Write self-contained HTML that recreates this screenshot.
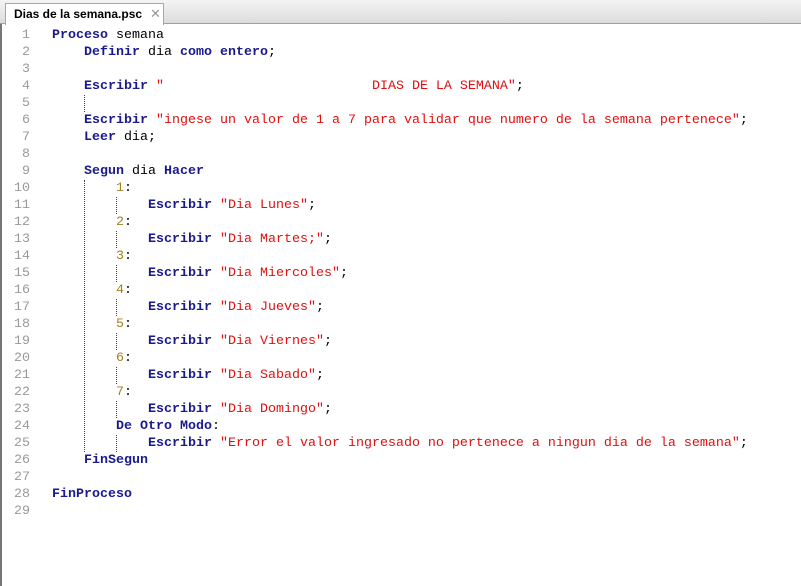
<!DOCTYPE html>
<html><head><meta charset="utf-8"><style>
*{margin:0;padding:0;box-sizing:border-box}
body{width:801px;height:586px;overflow:hidden;background:#fff;position:relative;font-family:"Liberation Mono",monospace}
.top{position:absolute;left:0;top:0;width:801px;height:24px;background:linear-gradient(#f4f4f4,#dcdcdc);border-bottom:1px solid #a0a0a0}
.tab{position:absolute;left:5px;top:3px;width:159px;height:22px;background:#fff;border:1px solid #a8a8a8;border-bottom:none;font-family:"Liberation Sans",sans-serif;font-size:12px;font-weight:bold;padding:3px 0 0 8px;color:#000}
.tab span{position:absolute;left:144px;top:2px;font-weight:normal;color:#999;font-size:13px}
.lb{position:absolute;left:0;top:24px;width:2px;height:562px;background:#777}
.ln{position:absolute;left:0;width:30px;text-align:right;font-size:13.33px;color:#999;line-height:17px}
.cd{position:absolute;left:52px;font-size:13.33px;line-height:17px;white-space:pre;color:#000}
b{color:#1a1a8c}
i{font-style:normal;color:#e01010}
u{text-decoration:none;color:#a08020}
.g{position:absolute;width:0;border-left:1px dotted #444}
</style></head><body>
<div class="top"><div class="tab">Dias de la semana.psc<span>✕</span></div></div>
<div class="lb"></div>
<div id="c"></div>
<script>
var L=[
'<b>Proceso</b> semana',
'    <b>Definir</b> dia <b>como</b> <b>entero</b>;',
'',
'    <b>Escribir</b> <i>"                          DIAS DE LA SEMANA"</i>;',
'',
'    <b>Escribir</b> <i>"ingese un valor de 1 a 7 para validar que numero de la semana pertenece"</i>;',
'    <b>Leer</b> dia;',
'',
'    <b>Segun</b> dia <b>Hacer</b>',
'        <u>1</u>:',
'            <b>Escribir</b> <i>"Dia Lunes"</i>;',
'        <u>2</u>:',
'            <b>Escribir</b> <i>"Dia Martes;"</i>;',
'        <u>3</u>:',
'            <b>Escribir</b> <i>"Dia Miercoles"</i>;',
'        <u>4</u>:',
'            <b>Escribir</b> <i>"Dia Jueves"</i>;',
'        <u>5</u>:',
'            <b>Escribir</b> <i>"Dia Viernes"</i>;',
'        <u>6</u>:',
'            <b>Escribir</b> <i>"Dia Sabado"</i>;',
'        <u>7</u>:',
'            <b>Escribir</b> <i>"Dia Domingo"</i>;',
'        <b>De Otro Modo</b>:',
'            <b>Escribir</b> <i>"Error el valor ingresado no pertenece a ningun dia de la semana"</i>;',
'    <b>FinSegun</b>',
'',
'<b>FinProceso</b>',
''];
var h='';
for(var n=0;n<L.length;n++){var t=27+n*17;
h+='<div class="ln" style="top:'+t+'px">'+(n+1)+'</div><div class="cd" style="top:'+t+'px">'+L[n]+'</div>';}
h+='<div class="g" style="left:84px;top:95px;height:17px"></div>';
h+='<div class="g" style="left:84px;top:180px;height:272px"></div>';
for(var k=0;k<8;k++){h+='<div class="g" style="left:116px;top:'+(197+k*34)+'px;height:17px"></div>';}
document.getElementById('c').innerHTML=h;
</script>
</body></html>
